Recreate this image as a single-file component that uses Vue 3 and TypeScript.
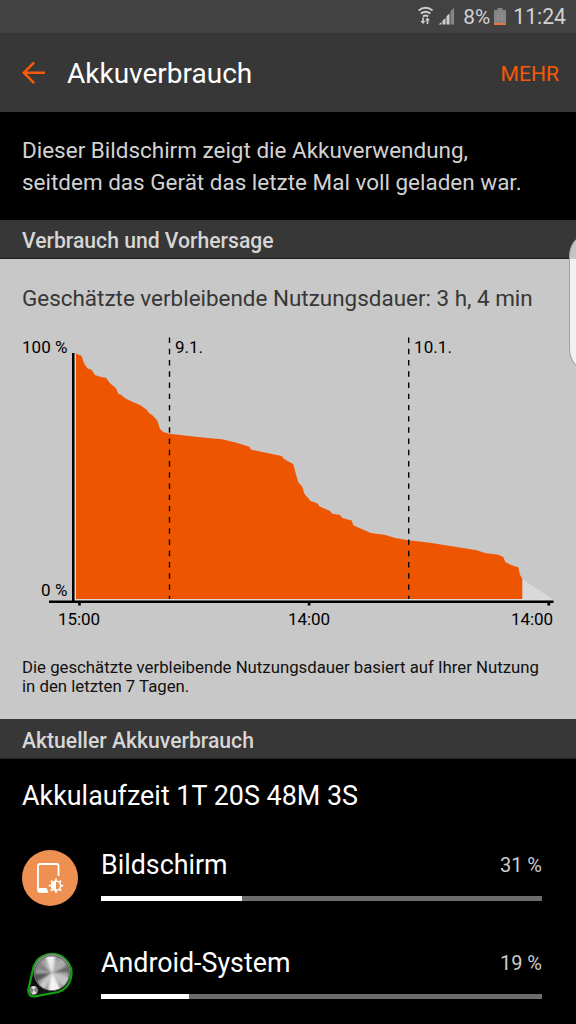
<script setup lang="ts">
interface Usage {
  name: string
  percent: number
  fill: number
  icon: 'display' | 'system'
}

const usages: Usage[] = [
  { name: 'Bildschirm', percent: 31, fill: 32, icon: 'display' },
  { name: 'Android-System', percent: 19, fill: 20, icon: 'system' },
]

const level: [number, number][] = [
  [76, 353.5], [81.7, 356], [84, 363.3], [87.3, 368.3], [91.7, 370], [95, 375], [101, 377], [106, 377.7],
  [110, 383.3], [116, 388.3], [118.3, 393.7], [121, 394.7], [125, 398.3], [133.3, 402.3], [140, 405],
  [146.7, 409.7], [149, 413], [153.3, 416], [157.3, 420.7], [160, 429], [163.3, 432], [169.3, 433.7],
  [200, 437.3], [221.7, 439.3], [236.7, 442.7], [249.3, 446.7], [251, 449.7], [281.7, 456], [284, 459],
  [293.3, 464.3], [295.7, 473.3], [298.3, 482.3], [302.3, 486.7], [304.3, 493.7], [310.7, 501],
  [317.3, 503.3], [319.3, 506.3], [330, 511], [332.3, 513.7], [340, 515], [342.3, 518], [351.7, 520.5],
  [353.3, 525.3], [370.7, 533], [385.7, 535], [395, 538], [408.7, 540.3], [430, 542.7], [476.7, 550.3],
  [485, 553], [498.3, 554.7], [503.3, 557], [505.3, 562], [511.7, 565.3], [518.3, 567.3], [520, 574.7],
  [522.3, 579],
]
const area = 'M76 599L' + level.map((p) => p.join(' ')).join('L') + 'L522.3 599Z'
</script>

<template>
  <div class="screen">
    <div class="status">
      <svg class="status-icons" width="40" height="20" viewBox="0 0 40 20">
        <g fill="none" stroke="#cfcfcf" stroke-width="1.9">
          <path d="M.6 4.4Q7.6 -.9 14.6 4.4M2.8 7.5Q7.6 3.8 12.4 7.5M5 10.4Q7.6 8.4 10.2 10.4" />
        </g>
        <path fill="#cfcfcf" d="M4.2 11.5h1.6v3.6h1.7L5 18.1l-2.5-3h1.7zM10.3 18.1H8.7v-3.6H7l2.5-3 2.5 3h-1.7z" />
        <path fill="#cfcfcf" d="M20.5 18.5l3-2.6v2.6zM24.5 14.7l3-2.6v6.4h-3zM28.5 10.3l3-2.9v11.1h-3z" />
        <path fill="#858585" d="M32.5 5.2l3.6-3.4v16.7h-3.6z" />
      </svg>
      <span class="charge">8%</span>
      <svg class="battery" width="12" height="18" viewBox="0 0 12 18">
        <path fill="#858585" d="M3.5 0h5v2H12v15H0V2h3.5z" />
        <path fill="none" stroke="#aaa" stroke-width=".8" stroke-dasharray="1 1" d="M4 5v8M8 5v8" />
        <path fill="#e9713a" d="M0 15h12v2H0z" />
      </svg>
      <span class="clock">11:24</span>
    </div>

    <header class="appbar">
      <svg class="back" width="24" height="24" viewBox="0 0 24 24">
        <path d="M12.2 1.3L1.8 11.7l10.4 10.4M1.5 11.7H23" fill="none" stroke="#f55a08" stroke-width="2.6" />
      </svg>
      <h1>Akkuverbrauch</h1>
      <span class="more">MEHR</span>
    </header>

    <p class="intro">Dieser Bildschirm zeigt die Akkuverwendung,<br />seitdem das Gerät das letzte Mal voll geladen war.</p>

    <h2 class="section first">Verbrauch und Vorhersage</h2>

    <section class="forecast">
      <p class="estimate">Geschätzte verbleibende Nutzungsdauer: 3 h, 4 min</p>
      <svg class="chart" width="576" height="310" viewBox="0 330 576 310">
        <path d="M522.3 579L552.5 599H522.3Z" fill="#d9d9d9" />
        <path d="M75.3 354V599.6H552" fill="none" stroke="#dedede" stroke-width="1" />
        <path :d="area" fill="#ee5500" />
        <g stroke="#000" stroke-width="1.4" stroke-dasharray="5.4 5.82">
          <path d="M169.5 337.6V599" />
          <path d="M408.7 337.6V599" />
        </g>
        <path d="M72 353h2.5v247.5H72zM49 600.5h504.5v2.6H49zM78.2 603h2.6v2.5h-2.6zM307.8 603h2.6v2.5h-2.6zM547.4 603h2.8v2.5h-2.8z" />
        <text x="22" y="353" textLength="45.5">100 %</text>
        <text x="41" y="596" textLength="26.5">0 %</text>
        <text x="175" y="353" textLength="28">9.1.</text>
        <text x="414" y="353" textLength="38">10.1.</text>
        <text x="58" y="625" textLength="42">15:00</text>
        <text x="288" y="625" textLength="42">14:00</text>
        <text x="511" y="625" textLength="42">14:00</text>
      </svg>
      <p class="note">Die geschätzte verbleibende Nutzungsdauer basiert auf Ihrer Nutzung<br />in den letzten 7 Tagen.</p>
    </section>

    <h2 class="section">Aktueller Akkuverbrauch</h2>

    <p class="runtime">Akkulaufzeit 1T 20S 48M 3S</p>

    <ul class="list">
      <li v-for="item in usages" :key="item.name" class="row">
        <svg v-if="item.icon === 'display'" class="icon" width="56" height="56" viewBox="0 0 56 56">
          <circle cx="28" cy="28" r="28" fill="#ee9052" />
          <path d="M36.5 26V15.8Q36.5 14 34.5 14H18Q16 14 16 16v24q0 1.8 2 1.8h7.5" fill="none" stroke="#fff" stroke-width="1.8" />
          <path d="M16 38h8.5l2 4.5H18q-2 0-2-2z" fill="#fff" />
          <circle cx="34" cy="35.7" r="4.6" fill="none" stroke="#fff" stroke-width="1.5" />
          <path d="M34 31.1a4.6 4.6 0 0 0 0 9.2z" fill="#fff" />
          <path d="M34 28.5v2.3M34 40.6v2.3M26.8 35.7h2.3M38.9 35.7h2.3M28.9 30.6l1.7 1.7M37.4 39.1l1.7 1.7M28.9 40.8l1.7-1.7M37.4 32.3l1.7-1.7" stroke="#fff" stroke-width="1.7" />
        </svg>
        <svg v-else class="icon" width="56" height="56" viewBox="0 0 56 56">
          <defs>
            <radialGradient id="metal">
              <stop offset="0" stop-color="#d2d2d2" />
              <stop offset=".8" stop-color="#a4a4a4" />
              <stop offset="1" stop-color="#8c8c8c" />
            </radialGradient>
            <clipPath id="disc"><circle cx="30" cy="25.3" r="17.3" /></clipPath>
            <filter id="brushed" x="-20%" y="-20%" width="140%" height="140%"><feGaussianBlur stdDeviation="1.3" /></filter>
          </defs>
          <path d="M11.6 18.5A19.6 19.6 0 1 1 36.5 44L13 48.3Q6.2 49 6.2 42Z" fill="#111" stroke="#11a111" stroke-width="2.2" />
          <circle cx="30" cy="24.3" r="18.3" fill="#8c8c8c" />
          <circle cx="30" cy="25.3" r="17.3" fill="url(#metal)" />
          <g clip-path="url(#disc)">
            <g filter="url(#brushed)">
              <path d="M30 25L22 5H34Z" fill="#eee" />
              <path d="M30 25L12 8L6 20Z" fill="#858585" />
              <path d="M30 25L8 26L12 35Z" fill="#555" />
              <path d="M30 25L14 40L20 46Z" fill="#ccc" />
              <path d="M30 25L25 48H42Z" fill="#f4f4f4" />
              <path d="M30 25L43 40L50 30Z" fill="#c4c4c4" />
              <path d="M30 25L50 16V24Z" fill="#666" />
              <path d="M30 25L40 8L46 13Z" fill="#aaa" />
            </g>
          </g>
          <circle cx="30" cy="25.3" r="17.3" fill="none" stroke="#555" stroke-width=".7" />
          <circle cx="11.7" cy="42.3" r="4.4" fill="#858585" />
          <path d="M11.7 42L9 39Q12 36.8 14 39ZM11.7 42l-2 4q3 1 5-1z" fill="#ddd" />
        </svg>
        <div class="info">
          <div class="labels">
            <span class="name">{{ item.name }}</span>
            <span class="percent">{{ item.percent }} %</span>
          </div>
          <div class="track"><div class="fill" :style="{ width: item.fill + '%' }"></div></div>
        </div>
      </li>
    </ul>
    <div class="edge-handle"></div>
  </div>
</template>

<style>
body {
  margin: 0;
  background: #000;
}
</style>

<style scoped>
.screen {
  position: relative;
  width: 576px;
  height: 1024px;
  overflow: hidden;
  background: #000;
  color: #fff;
  font-family: Roboto, "Liberation Sans", sans-serif;
}
h1, h2, p, ul {
  margin: 0;
  padding: 0;
  font-weight: 400;
  white-space: nowrap;
}
.status {
  display: flex;
  height: 33px;
  box-sizing: border-box;
  padding-right: 10px;
  justify-content: flex-end;
  align-items: center;
  background: #424242;
  color: #d2d2d2;
  font-size: 20.8px;
  line-height: 34px;
}
.status-icons {
  margin: 0 5px 1px 0;
}
.battery {
  margin: 0 7px 0 4px;
}
.clock {
  font-size: 21.2px;
}
.appbar {
  display: flex;
  height: 79px;
  box-sizing: border-box;
  padding: 0 17px 0 22px;
  align-items: center;
  background: #373737;
}
.back {
  margin-right: 21px;
}
h1 {
  flex: 1;
  font-size: 28px;
  line-height: 36px;
  padding-top: 2px;
}
.more {
  padding-top: 2px;
  color: #f55a08;
  font-size: 21.1px;
}
.intro {
  height: 108px;
  box-sizing: border-box;
  padding: 22px 22px 0;
  color: #d2d2d2;
  font-size: 22.47px;
  line-height: 32px;
}
.section {
  height: 40px;
  box-sizing: border-box;
  padding-left: 22px;
  border-bottom: 1px solid #202020;
  background: #373737;
  color: #d6d6d6;
  font-size: 21.15px;
  font-weight: 500;
  line-height: 43px;
}
.section.first {
  height: 39px;
  line-height: 41px;
}
.forecast {
  height: 460px;
  background: #c8c8c8;
}
.estimate {
  height: 71px;
  box-sizing: border-box;
  padding: 23px 22px 0;
  color: #373737;
  font-size: 22.45px;
  line-height: 32px;
}
.chart {
  display: block;
  font-size: 17px;
}
.note {
  padding: 18px 22px 0;
  color: #111;
  font-size: 16.77px;
  line-height: 19.4px;
}
.runtime {
  padding: 20px 22px 0;
  height: 81px;
  box-sizing: border-box;
  font-size: 26.9px;
  line-height: 34px;
}
.list {
  list-style: none;
}
.row {
  display: flex;
  height: 98px;
  box-sizing: border-box;
  padding: 9px 34px 0 22px;
}
.icon {
  flex: none;
  margin: 1px 23px 0 0;
}
.info {
  flex: 1;
}
.labels {
  display: flex;
  height: 47px;
  justify-content: space-between;
}
.name {
  font-size: 26.8px;
  line-height: 33px;
}
.percent {
  color: #ccc;
  font-size: 20px;
  line-height: 32px;
}
.track {
  height: 5px;
  background: #6c6c6c;
}
.fill {
  height: 5px;
  background: #fff;
}
.edge-handle {
  position: absolute;
  left: 569px;
  top: 237px;
  width: 30px;
  height: 129px;
  border: 1px solid #a0a0a0;
  border-radius: 13px / 20px;
  background: linear-gradient(#c4c4c4 21px, #f1f1f1 21px);
}
</style>
